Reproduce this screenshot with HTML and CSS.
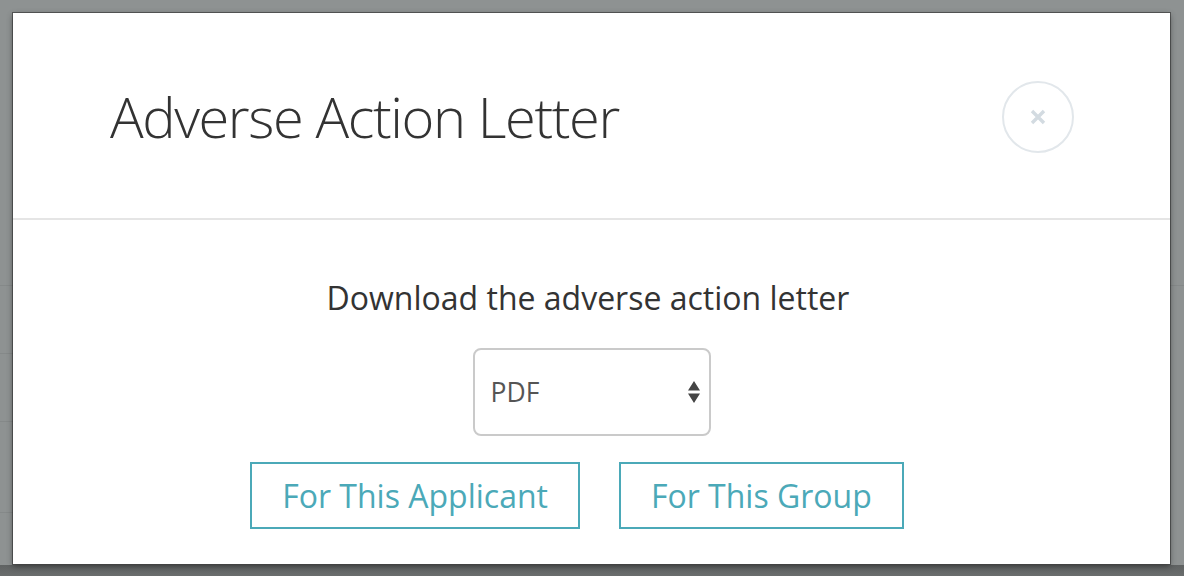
FILE: index.html
```html
<!DOCTYPE html>
<html>
<head>
<meta charset="utf-8">
<link rel="stylesheet" href="styles.css">
</head>
<body>
<div class="backdrop">
  <div class="modal">
    <div class="modal-header">
      <h1 class="modal-title">Adverse Action Letter</h1>
      <button class="close-btn" aria-label="Close">
        <svg width="16" height="16" viewBox="0 0 16 16"><path d="M2 2 L14 14 M14 2 L2 14" stroke="#d3dbe1" stroke-width="3.4" stroke-linecap="butt"/></svg>
      </button>
    </div>
    <div class="modal-body">
      <p class="prompt">Download the adverse action letter</p>
      <div class="select">
        <span class="select-value">PDF</span>
        <svg class="select-arrows" width="14" height="26" viewBox="0 0 14 26"><path d="M7 2 L13 11.5 L1 11.5 Z M1 14.5 L13 14.5 L7 24 Z" fill="#444"/></svg>
      </div>
      <div class="actions">
        <button class="btn">For This Applicant</button>
        <button class="btn">For This Group</button>
      </div>
    </div>
  </div>
</div>
</body>
</html>
```

FILE: styles.css
```css
html, body {
  margin: 0;
  padding: 0;
  width: 1184px;
  height: 576px;
  overflow: hidden;
}
body {
  background: #8e9292;
  font-family: "Open Sans", "Liberation Sans", sans-serif;
}
.backdrop {
  height: 576px;
  padding: 13px 0 0 13px;
  box-sizing: border-box;
  background:
    linear-gradient(#858989, #858989) 0 285px / 100% 1px no-repeat,
    linear-gradient(#858989, #858989) 0 353px / 13px 1px no-repeat,
    linear-gradient(#858989, #858989) 0 421px / 13px 1px no-repeat,
    linear-gradient(#858989, #858989) 0 512px / 13px 1px no-repeat,
    linear-gradient(#5f6262, #6a6d6d) 0 565px / 100% 11px no-repeat,
    #8e9292;
}
.modal {
  width: 1157px;
  height: 551px;
  background: #fff;
  box-shadow: 0 0 0 1px rgba(40,40,40,0.55), 0 2px 6px rgba(0,0,0,0.45);
  display: flex;
  flex-direction: column;
}
.modal-header {
  height: 205px;
  border-bottom: 2px solid #e5e5e5;
  display: flex;
  align-items: center;
  justify-content: space-between;
  padding: 0 97px;
}
.modal-title {
  margin: 0;
  font-weight: 300;
  font-size: 56px;
  color: #333;
  letter-spacing: -1.4px;
}
.close-btn {
  width: 72px;
  height: 72px;
  border-radius: 50%;
  border: 2px solid #e2e7eb;
  background: #fff;
  display: flex;
  align-items: center;
  justify-content: center;
  padding: 0;
  margin-top: 2px;
  margin-right: -1px;
}
.modal-body {
  display: flex;
  flex-direction: column;
  align-items: center;
  padding-top: 56px;
}
.prompt {
  margin: 0 7px 0 0;
  font-size: 32px;
  color: #333;
  line-height: 44px;
}
.select {
  margin-top: 28px;
  width: 238px;
  height: 88px;
  box-sizing: border-box;
  border: 2px solid #cacaca;
  border-radius: 8px;
  display: flex;
  align-items: center;
  justify-content: space-between;
  padding: 0 8px 0 16px;
}
.select-value {
  font-size: 26.5px;
  color: #555;
}
.actions {
  display: flex;
  gap: 39px;
  margin: 26px 29px 0 0;
}
.btn {
  font-family: "Open Sans", "Liberation Sans", sans-serif;
  font-size: 32px;
  color: #4ba9b8;
  background: #fff;
  border: 2px solid #4ba9b8;
  height: 67px;
  padding: 0 30px;
}
```
